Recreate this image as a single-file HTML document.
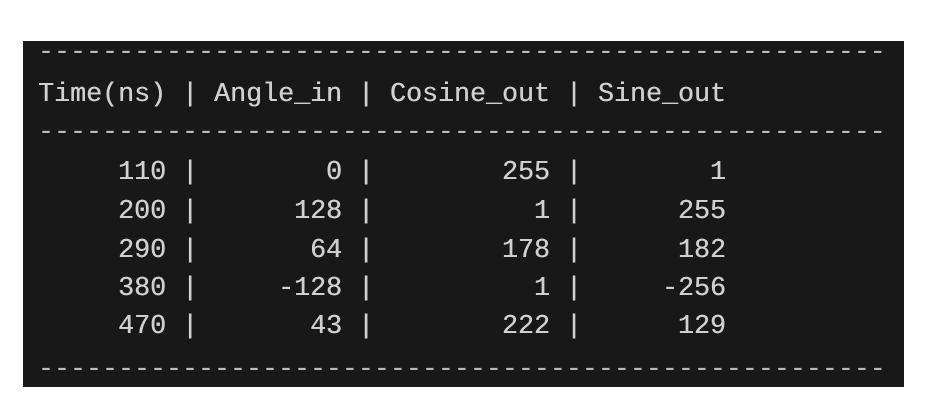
<!DOCTYPE html>
<html><head><meta charset="utf-8"><style>
html,body{margin:0;padding:0;background:#fff;width:926px;height:417px;overflow:hidden}
.box{position:absolute;left:23px;top:41px;width:881px;height:346px;background:#181818}
.l{position:absolute;left:38px;font-family:"Liberation Mono",monospace;font-size:26.67px;line-height:30px;height:30px;color:#d0d0d0;white-space:pre;text-shadow:0.4px 0 0 #d0d0d0}
.d{color:#bbbbbb;text-shadow:none}
</style></head><body>
<div class="box"></div>
<div class="l d" style="top:38px">-----------------------------------------------------</div>
<div class="l" style="top:80px">Time(ns) | Angle_in | Cosine_out | Sine_out</div>
<div class="l d" style="top:118px">-----------------------------------------------------</div>
<div class="l" style="top:158px">     110 |        0 |        255 |        1</div>
<div class="l" style="top:197px">     200 |      128 |          1 |      255</div>
<div class="l" style="top:236px">     290 |       64 |        178 |      182</div>
<div class="l" style="top:274px">     380 |     -128 |          1 |     -256</div>
<div class="l" style="top:312px">     470 |       43 |        222 |      129</div>
<div class="l d" style="top:355px">-----------------------------------------------------</div>
</body></html>
